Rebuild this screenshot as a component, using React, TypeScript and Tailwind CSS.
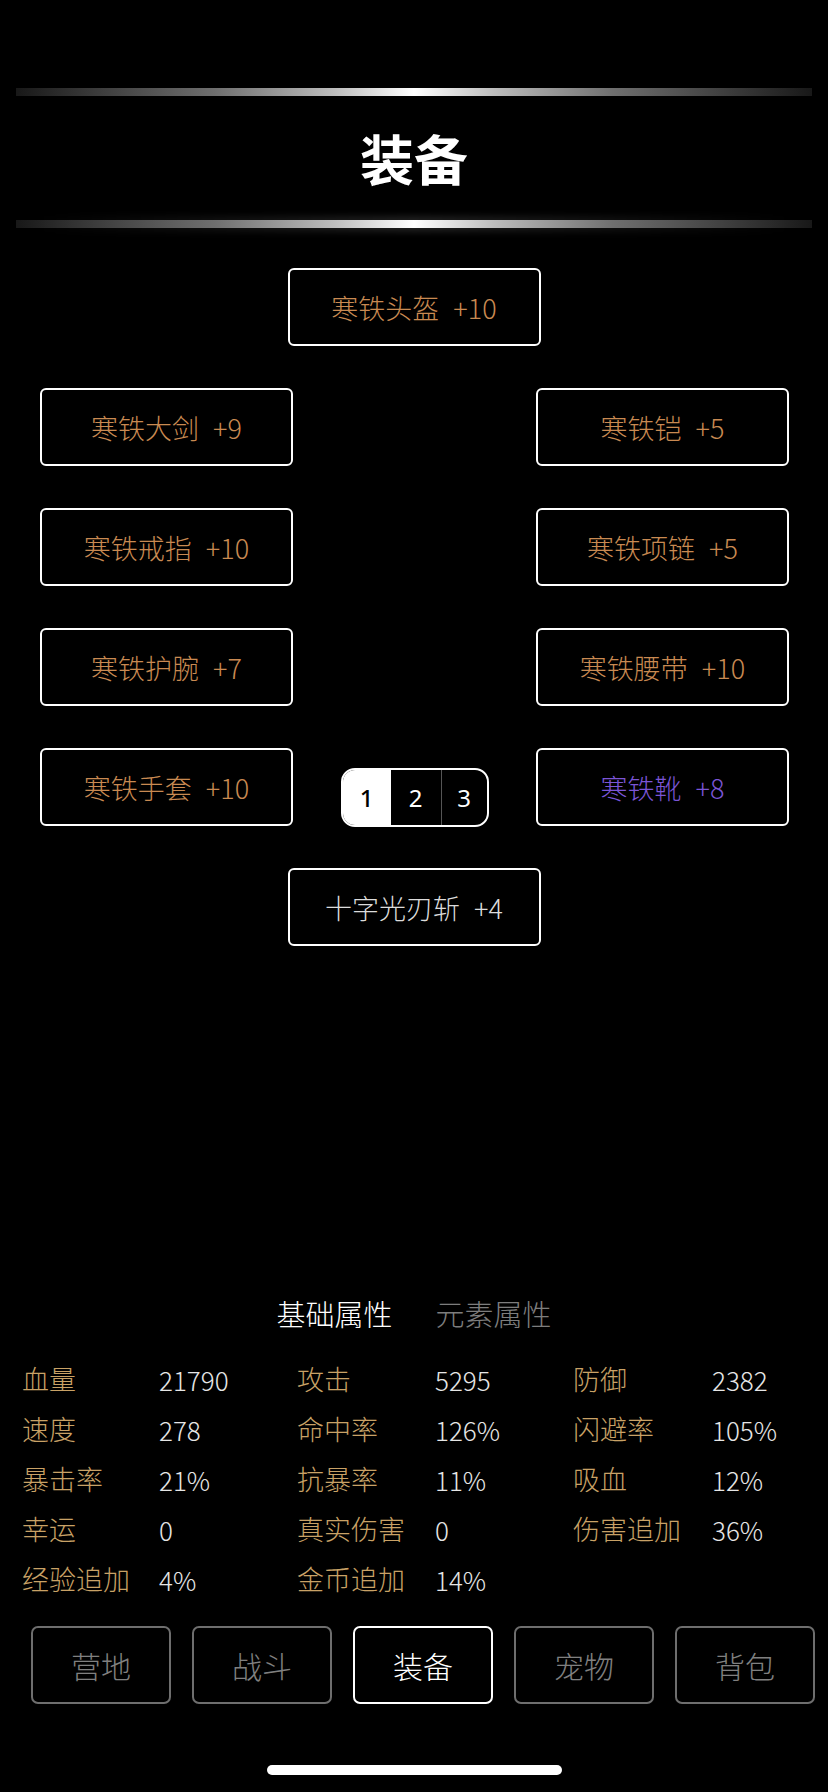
import React from 'react';

type Item = { name: string; level: string; tone?: 'gold' | 'purple' | 'white' };

const toneClass = {
  gold: 'text-[#c98a52]',
  purple: 'text-[#7b55d6]',
  white: 'text-[#dcdcdc]',
};

const stats: [string, string][] = [
  ['血量', '21790'],
  ['攻击', '5295'],
  ['防御', '2382'],
  ['速度', '278'],
  ['命中率', '126%'],
  ['闪避率', '105%'],
  ['暴击率', '21%'],
  ['抗暴率', '11%'],
  ['吸血', '12%'],
  ['幸运', '0'],
  ['真实伤害', '0'],
  ['伤害追加', '36%'],
  ['经验追加', '4%'],
  ['金币追加', '14%'],
];

const tabs = ['营地', '战斗', '装备', '宠物', '背包'];

function EquipSlot({ item }: { item: Item }) {
  const tone = toneClass[item.tone ?? 'gold'];
  return (
    <div className="w-[253px] h-[78px] border-2 border-white rounded-[6px] flex items-center justify-center">
      <span className={`text-[27px] font-light leading-none ${tone}`}>
        {item.name}
        <span className="ml-[14px]">{item.level}</span>
      </span>
    </div>
  );
}

function ShineBar({ glow }: { glow?: boolean }) {
  return (
    <div className="mx-[16px] h-[8px] relative">
      {glow && (
        <div className="absolute inset-x-[20px] -top-[4px] -bottom-[4px] bg-[linear-gradient(90deg,transparent,rgba(255,255,255,0.12),transparent)] blur-[3px]" />
      )}
      <div className="absolute inset-0 bg-[linear-gradient(90deg,rgba(40,40,40,0.6)_0%,#6f6f6f_25%,#bdbdbd_40%,#ffffff_50%,#bdbdbd_60%,#6f6f6f_75%,rgba(40,40,40,0.6)_100%)]" />
    </div>
  );
}

export default function App() {
  return (
    <div className="w-[828px] h-[1792px] bg-black flex flex-col font-['Noto_Sans_CJK_SC','Noto_Sans',sans-serif] overflow-hidden">
      {/* Header */}
      <div className="pt-[88px]">
        <ShineBar />
        <div className="h-[124px] flex items-center justify-center">
          <h1 className="text-white text-[54px] font-bold leading-none">装备</h1>
        </div>
        <ShineBar glow />
      </div>

      {/* Equipment slots */}
      <div className="mt-[40px] flex flex-col gap-[42px]">
        <div className="flex justify-center">
          <EquipSlot item={{ name: '寒铁头盔', level: '+10' }} />
        </div>
        <div className="flex justify-between pl-[40px] pr-[39px]">
          <EquipSlot item={{ name: '寒铁大剑', level: '+9' }} />
          <EquipSlot item={{ name: '寒铁铠', level: '+5' }} />
        </div>
        <div className="flex justify-between pl-[40px] pr-[39px]">
          <EquipSlot item={{ name: '寒铁戒指', level: '+10' }} />
          <EquipSlot item={{ name: '寒铁项链', level: '+5' }} />
        </div>
        <div className="flex justify-between pl-[40px] pr-[39px]">
          <EquipSlot item={{ name: '寒铁护腕', level: '+7' }} />
          <EquipSlot item={{ name: '寒铁腰带', level: '+10' }} />
        </div>
        <div className="flex justify-between items-end pl-[40px] pr-[39px]">
          <EquipSlot item={{ name: '寒铁手套', level: '+10' }} />
          <div className="h-[59px] w-[148px] mb-[-1px] border-2 border-white rounded-[14px] flex overflow-hidden font-['Noto_Sans',sans-serif] text-[24px]">
            <div className="w-[48px] bg-white text-black font-medium flex items-center justify-center">1</div>
            <div className="w-[50px] text-white flex items-center justify-center">2</div>
            <div className="w-px bg-[#555]" />
            <div className="flex-1 text-white flex items-center justify-center">3</div>
          </div>
          <EquipSlot item={{ name: '寒铁靴', level: '+8', tone: 'purple' }} />
        </div>
        <div className="flex justify-center">
          <EquipSlot item={{ name: '十字光刃斩', level: '+4', tone: 'white' }} />
        </div>
      </div>

      {/* Attribute tabs */}
      <div className="mt-[349px] h-[36px] flex justify-center items-center gap-[43px] text-[29px] font-light leading-none">
        <span className="text-white">基础属性</span>
        <span className="text-[#7d7d7d]">元素属性</span>
      </div>

      {/* Stats */}
      <div className="mt-[23px] pl-[22px] grid grid-cols-[137px_138px_138px_138px_139px_1fr]">
        {stats.map(([label, value]) => (
          <React.Fragment key={label}>
            <div className="h-[50px] flex items-center text-[27px] font-light text-[#c9a266] whitespace-nowrap">
              {label}
            </div>
            <div className="h-[50px] flex items-center text-[26px] font-light text-[#e6e6e6]">{value}</div>
          </React.Fragment>
        ))}
      </div>

      {/* Bottom nav */}
      <div className="mt-[22px] pl-[31px] flex gap-[21px]">
        {tabs.map((t) => {
          const active = t === '装备';
          return (
            <div
              key={t}
              className={`w-[140px] h-[78px] rounded-[7px] border-2 flex items-center justify-center text-[30px] font-light ${
                active ? 'border-white text-white' : 'border-[#6e6e6e] text-[#808080]'
              }`}
            >
              {t}
            </div>
          );
        })}
      </div>

      {/* Home indicator */}
      <div className="mt-[61px] flex justify-center">
        <div className="w-[295px] h-[10px] rounded-full bg-white" />
      </div>
    </div>
  );
}
